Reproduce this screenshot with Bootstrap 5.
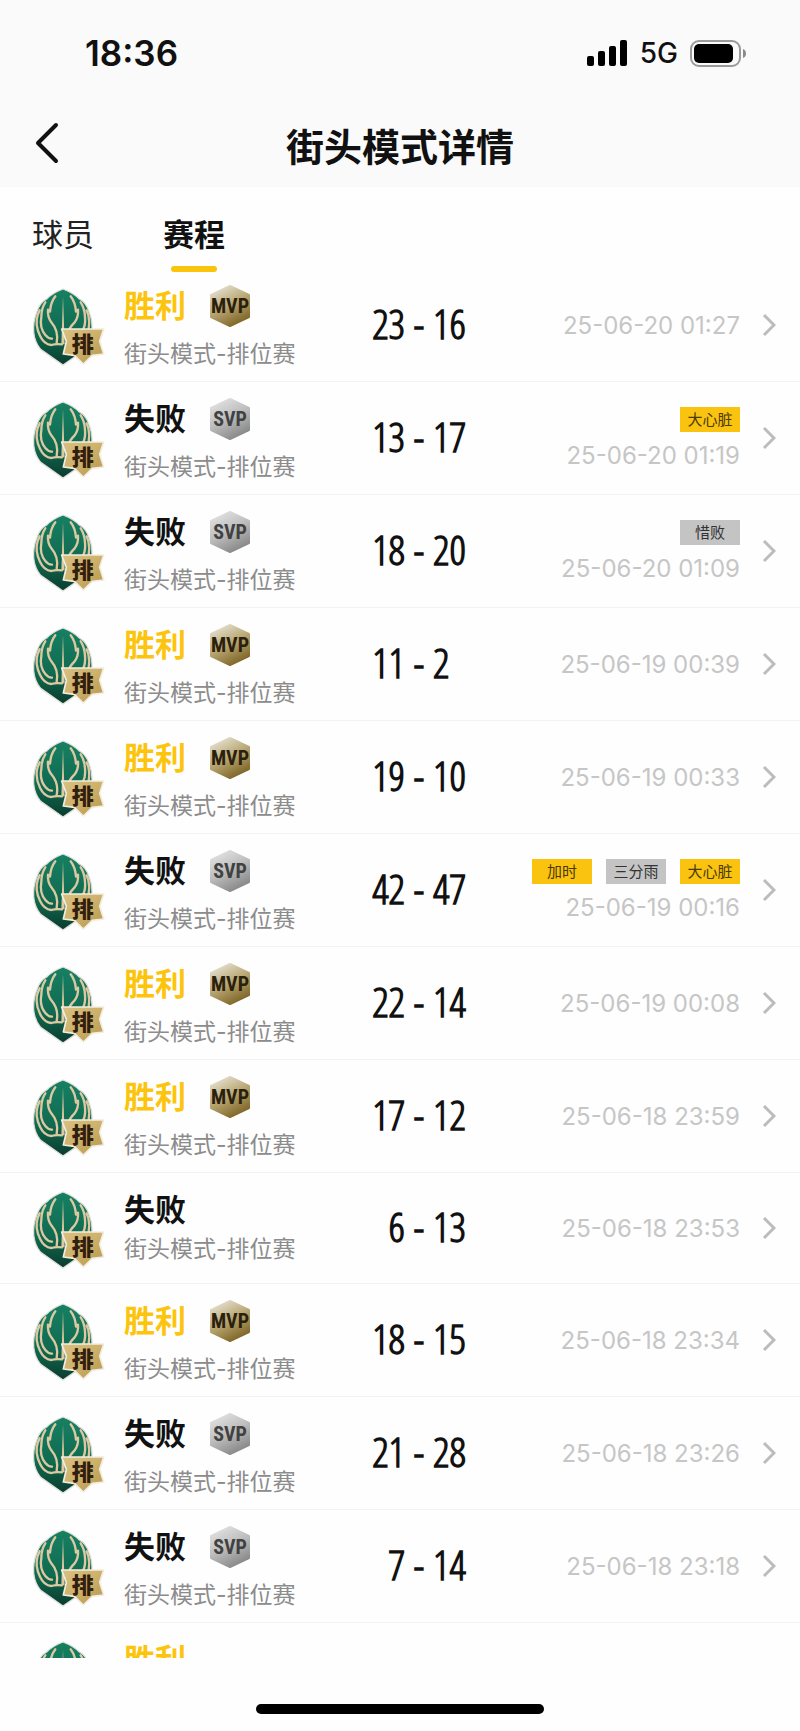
<!DOCTYPE html>
<html lang="zh-CN">
<head>
<meta charset="utf-8">
<meta name="viewport" content="width=device-width, initial-scale=1">
<title>街头模式详情</title>
<link href="https://cdn.jsdelivr.net/npm/bootstrap@5.3.0/dist/css/bootstrap.min.css" rel="stylesheet">
<style>
  body { font-family: Inter, "Noto Sans CJK SC", sans-serif; color: #111; background: #fefefe; }
  .top-area { background: #fafafa; }
  .status-bar { height: 106px; padding: 0 54px 0 85px; }
  .clock { font-size: 35px; line-height: 40px; font-weight: 600; }
  .network { font-size: 28px; line-height: 32px; font-weight: 500; }
  .title-bar { height: 81px; padding: 0 32px; }
  .title-bar h1 { font-size: 38px; line-height: 48px; font-weight: 700; }
  .side { width: 32px; }
  .tab-bar { height: 82px; gap: 69px; padding: 0 32px; }
  .tab-link { font-size: 31px; line-height: 40px; color: #222; text-decoration: none; padding-top: 28px; }
  .tab-link.active { font-weight: 700; color: #111; }
  .tab-link.active::after { content: ""; display: block; width: 46px; height: 6px; margin: 11px auto 0; border-radius: 3px; background: #f8c50c; position: relative; z-index: 1; }
  .match-row { min-height: 111px; padding: 16px 24px 11px 32px; border: 0; border-bottom: 1px solid #f3f3f3; background: #fefefe; color: #111; }
  .emblem { width: 73px; height: 80px; margin-bottom: 2px; }
  .info { width: 229px; margin-left: 19px; }
  .result { font-size: 31px; line-height: 42px; font-weight: 700; }
  .result.win { color: #fcc40d; }
  .medal { width: 40px; height: 42px; }
  .head-line { gap: 24px; margin-bottom: 2px; }
  .has-medal { margin-bottom: 11px; }
  .mode { font-size: 23px; line-height: 32px; color: #8c8c8c; }
  .score { font-family: "Open Sans Condensed Light", "Roboto Condensed", sans-serif; font-size: 41px; line-height: 44px; font-weight: 600; padding-bottom: 10px; }
  .score-num { width: 52px; }
  .score-dash { width: 28px; }
  .when { font-size: 24px; line-height: 28px; color: #c6c6c6; padding-bottom: 4px; }
  .tag { width: 60px; font-size: 15px; line-height: 25px; color: #333; background: #c4c4c4; }
  .tag.hot { background: #fac30f; color: #4a3a08; }
  .tags { gap: 14px; margin-bottom: 10px; }
  .go { width: 14px; height: 24px; margin: 0 0 6px 22px; }
  .home-area { height: 73px; padding-bottom: 17px; background: #fefefe; }
  .home-pill { width: 36%; height: 10px; border-radius: 5px; background: #000; }
</style>
</head>
<body>
<svg width="0" height="0" class="position-absolute" aria-hidden="true">
  <defs>
    <linearGradient id="leaf" x1="0" y1="0" x2="0" y2="1"><stop offset="0" stop-color="#178063"/><stop offset=".6" stop-color="#0f6a50"/><stop offset="1" stop-color="#0a3b2e"/></linearGradient>
    <linearGradient id="ribbon" x1="0" y1="0" x2="1" y2="1"><stop offset="0" stop-color="#d9c183"/><stop offset=".5" stop-color="#cdb16b"/><stop offset="1" stop-color="#b5964a"/></linearGradient>
    <linearGradient id="gold" x1="0.2" y1="0" x2=".7" y2="1"><stop offset="0" stop-color="#e6e1d2"/><stop offset=".5" stop-color="#b8a672"/><stop offset="1" stop-color="#7c6223"/></linearGradient>
    <linearGradient id="silver" x1="0.2" y1="0" x2=".7" y2="1"><stop offset="0" stop-color="#e2e2e2"/><stop offset=".5" stop-color="#bcbcbc"/><stop offset="1" stop-color="#858585"/></linearGradient>
  </defs>
</svg>

<div class="d-flex flex-column vh-100 overflow-hidden">
  <header class="top-area flex-shrink-0">
    <div class="status-bar d-flex align-items-center justify-content-between">
      <span class="clock">18:36</span>
      <div class="d-flex align-items-center network">
        <svg width="41" height="26" viewBox="0 0 41 26" aria-hidden="true"><rect x="0" y="16" width="7" height="10" rx="2"/><rect x="11" y="11" width="7" height="15" rx="2"/><rect x="22" y="6" width="7" height="20" rx="2"/><rect x="33" y="0" width="7" height="26" rx="2"/></svg>
        <span class="mx-2 px-1">5G</span>
        <svg width="56" height="27" viewBox="0 0 56 27" aria-hidden="true"><rect x="1" y="1" width="49" height="25" rx="8" fill="none" stroke="#9b9b9b" stroke-width="2"/><rect x="4" y="4" width="39" height="19" rx="5"/><path d="M53 9Q56 10 56 13.500Q56 17 53 18Z" fill="#8b8b8b"/></svg>
      </div>
    </div>
    <div class="title-bar d-flex align-items-center justify-content-between">
      <button type="button" class="btn side p-0 border-0 text-start mb-2" aria-label="返回"><svg width="28" height="42" viewBox="0 0 28 42" aria-hidden="true"><path d="M24 3L6 21L24 39" fill="none" stroke="#111" stroke-width="4" stroke-linecap="round" stroke-linejoin="round"/></svg></button>
      <h1 class="m-0">街头模式详情</h1>
      <span class="side"></span>
    </div>
  </header>

  <nav class="tab-bar d-flex align-items-start flex-shrink-0">
    <a class="tab-link" href="#players">球员</a>
    <a class="tab-link active" href="#schedule" aria-current="page">赛程</a>
  </nav>

  <main class="flex-grow-1 overflow-hidden" id="schedule">
    <div class="list-group list-group-flush" id="matches"></div>
  </main>

  <footer class="home-area d-flex align-items-end justify-content-center flex-shrink-0"><div class="home-pill"></div></footer>
</div>

<script src="https://cdn.jsdelivr.net/npm/bootstrap@5.3.0/dist/js/bootstrap.bundle.min.js"></script>
<script>
  const emblem = `
    <svg class="emblem flex-shrink-0" viewBox="22 18 219 240" aria-hidden="true">
      <path d="M115 24Q146 36 164 54Q184 64 193 92Q205 120 201 153Q198 184 183 205L115 252L48 205Q30 184 27 153Q25 120 37 92Q46 64 66 54Q84 36 115 24Z" fill="url(#leaf)" stroke="#dedfd8" stroke-width="4" stroke-linejoin="round"/>
      <g fill="none" stroke="#dcc9a2" stroke-width="7" stroke-linejoin="round" stroke-linecap="round">
        <path d="M92 46Q78 64 76 92L70 86Q68 108 80 124Q103 150 96 186"/>
        <path d="M62 64Q50 82 50 108Q44 140 62 162Q72 174 82 173"/>
        <path d="M45 88L39 102Q30 132 46 164Q58 190 80 192Q92 188 112 190"/>
        <path d="M138 46Q152 64 154 92L160 86Q162 108 150 124Q136 138 134 146"/>
        <path d="M168 64Q180 82 181 108Q183 130 176 144M186 88L191 102Q196 122 192 143"/>
      </g>
      <path d="M115 46L120 190H110Z" fill="#dcc9a2"/>
      <path d="M111 144H237L225 181L237 219L203 223L176 249L149 223L116 219L125 181Z" fill="url(#ribbon)" stroke="#f2ede0" stroke-width="5" stroke-linejoin="round"/>
      <text x="174" y="212" text-anchor="middle" font-family="Noto Sans CJK SC, sans-serif" font-size="66" font-weight="900" fill="#32200f">排</text>
    </svg>`;
  const medalIcon = (name, fill, ink) => `
    <svg class="medal" viewBox="0 0 40 42" role="img" aria-label="${name}">
      <path d="M20 1L39 10V32L20 41L1 32V10Z" fill="url(#${fill})" stroke="url(#${fill})" stroke-width="2" stroke-linejoin="round"/>
      <text x="20" y="28" text-anchor="middle" font-family="Roboto Condensed, sans-serif" font-size="20" font-weight="700" fill="${ink}">${name}</text>
    </svg>`;
  const medals = { mvp: medalIcon('MVP', 'gold', '#2a210c'), svp: medalIcon('SVP', 'silver', '#414141') };

  // win, medal, own score, opponent score, time, tags (a leading * marks a highlighted tag)
  const matches = [
    [true, 'mvp', 23, 16, '25-06-20 01:27', []],
    [false, 'svp', 13, 17, '25-06-20 01:19', ['*大心脏']],
    [false, 'svp', 18, 20, '25-06-20 01:09', ['惜败']],
    [true, 'mvp', 11, 2, '25-06-19 00:39', []],
    [true, 'mvp', 19, 10, '25-06-19 00:33', []],
    [false, 'svp', 42, 47, '25-06-19 00:16', ['*加时', '三分雨', '*大心脏']],
    [true, 'mvp', 22, 14, '25-06-19 00:08', []],
    [true, 'mvp', 17, 12, '25-06-18 23:59', []],
    [false, '', 6, 13, '25-06-18 23:53', []],
    [true, 'mvp', 18, 15, '25-06-18 23:34', []],
    [false, 'svp', 21, 28, '25-06-18 23:26', []],
    [false, 'svp', 7, 14, '25-06-18 23:18', []]
  ];
  const head = (win, medal) => `
    <div class="head-line d-flex align-items-center ${medal ? 'has-medal' : ''}">
      <span class="result ${win ? 'win' : ''}">${win ? '胜利' : '失败'}</span>${medal ? medals[medal] : ''}
    </div>`;
  const row = ([win, medal, own, other, when, tags]) => `
    <a href="#match" class="list-group-item match-row d-flex align-items-center">
      ${emblem}
      <div class="info flex-shrink-0 align-self-start">${head(win, medal)}<div class="mode">街头模式-排位赛</div></div>
      <div class="score d-flex flex-shrink-0">
        <span class="score-num text-end">${own}</span><span class="score-dash text-center">-</span><span class="score-num">${other}</span>
      </div>
      <div class="flex-grow-1 text-end text-nowrap">
        ${tags.length ? `<div class="tags d-flex justify-content-end">${tags.map(t => `<span class="tag text-center ${t[0] === '*' ? 'hot' : ''}">${t.replace('*', '')}</span>`).join('')}</div>` : ''}
        <div class="when">${when}</div>
      </div>
      <svg class="go flex-shrink-0" viewBox="0 0 14 24" aria-hidden="true"><path d="M2 2L12 12L2 22" fill="none" stroke="#bcbcbc" stroke-width="3"/></svg>
    </a>`;
  const nextRow = `
    <a href="#match" class="list-group-item match-row d-flex align-items-center">
      ${emblem}<div class="info align-self-start">${head(true, '')}</div>
    </a>`;
  document.getElementById('matches').innerHTML = matches.map(row).join('') + nextRow;
</script>
</body>
</html>
